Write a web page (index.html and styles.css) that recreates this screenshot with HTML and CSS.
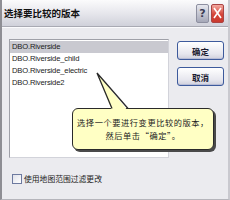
FILE: index.html
```html
<!DOCTYPE html>
<html lang="zh">
<head>
<meta charset="utf-8">
<link rel="stylesheet" href="styles.css">
</head>
<body>
<div class="window">
  <div class="titlebar">
    <span class="title">选择要比较的版本</span>
    <div class="caps">
      <span class="cap help">?</span>
      <span class="cap close">
        <svg width="9" height="12" viewBox="0 0 9 12"><path d="M1 1 L8 11 M8 1 L1 11" stroke="#fff" stroke-width="1.6" fill="none"/></svg>
      </span>
    </div>
  </div>
  <div class="body">
    <div class="main">
      <div class="list">
        <div class="row sel">DBO.Riverside</div>
        <div class="row">DBO.Riverside_child</div>
        <div class="row">DBO.Riverside_electric</div>
        <div class="row">DBO.Riverside2</div>
      </div>
      <div class="btns">
        <div class="btn">确定</div>
        <div class="btn">取消</div>
      </div>
    </div>
    <div class="footer">
      <span class="check"></span>
      <span class="label">使用地图范围过滤更改</span>
    </div>
  </div>
  <div class="callout">
    <div class="bubble">
      <div>选择一个要进行变更比较的版本，</div>
      <div>然后单击“确定”。</div>
    </div>
    <svg class="tail" width="40" height="40" viewBox="0 0 40 40">
      <path d="M1 1 L16 39 L32 39 Z" fill="#ffffc4"/>
      <path d="M16 36.5 L1 1 L32 36.5" fill="none" stroke="#2a2a2a" stroke-width="1.3" stroke-linejoin="miter"/>
    </svg>
  </div>
</div>
</body>
</html>
```

FILE: styles.css
```css
* { box-sizing: border-box; }
html, body { margin: 0; padding: 0; }
body {
  width: 230px;
  height: 200px;
  overflow: hidden;
  background: #e9e9ee;
  font-family: "Liberation Sans", "Noto Sans CJK SC", sans-serif;
}
.window {
  position: relative;
  width: 230px;
  height: 200px;
  background: #ebebef;
  border-left: 2px solid #8e8e94;
  border-right: 2px solid #c9c9cf;
  border-bottom: 1px solid #b5b5bb;
}
.titlebar {
  height: 27px;
  display: flex;
  align-items: center;
  justify-content: space-between;
  padding: 0 4px 0 2px;
  background: linear-gradient(#fbfbfc 0%, #e9e9ee 45%, #d0d1da 100%);
  border-bottom: 1px solid #a9aab3;
}
.title {
  font-family: "Noto Sans CJK SC", sans-serif;
  font-weight: 700;
  font-size: 9.5px;
  color: #111;
}
.caps {
  display: flex;
  gap: 2px;
  align-items: center;
}
.cap {
  width: 13px;
  height: 19px;
  border-radius: 2px;
  display: flex;
  align-items: center;
  justify-content: center;
}
.help {
  background: linear-gradient(#e6e7ee, #a6a8b8);
  border: 1px solid #8d8fa0;
  color: #3b3d55;
  font-family: "DejaVu Sans", sans-serif;
  font-weight: 700;
  font-size: 11px;
}
.close {
  background: linear-gradient(#f3a9a0, #d6463a 55%, #c9392e);
  border: 1px solid #a44;
}
.body {
  padding: 11px 4px 0 7px;
  border-top: 1px solid #fbfbfd;
}
.main {
  display: flex;
  gap: 8px;
  align-items: flex-start;
}
.list {
  width: 160px;
  height: 119px;
  background: #fff;
  border: 1px solid #9fa0a8;
  border-right-color: #d2d3da;
  border-bottom-color: #d2d3da;
  padding-top: 1px;
}
.row {
  height: 12px;
  line-height: 12px;
  padding-left: 2px;
  font-size: 7.6px;
  letter-spacing: -0.15px;
  color: #1a1a1a;
  white-space: nowrap;
}
.row.sel { background: #c9c9d0; }
.btns {
  display: flex;
  flex-direction: column;
  gap: 7px;
  padding-top: 2px;
}
.btn {
  width: 47px;
  height: 19px;
  border: 1px solid #3d5a9c;
  border-radius: 3px;
  background: linear-gradient(#ffffff, #e6e6ee 70%, #cfd0dc);
  box-shadow: inset 0 -1px 0 #b7bcd6;
  display: flex;
  align-items: center;
  justify-content: center;
  font-family: "Noto Sans CJK SC", sans-serif;
  font-weight: 700;
  font-size: 8.5px;
  color: #1a1a30;
}
.footer {
  display: flex;
  align-items: center;
  gap: 2px;
  margin-top: 15px;
  padding-left: 3px;
}
.check {
  flex: none;
  width: 10px;
  height: 10px;
  border: 1px solid #6d7aa0;
  background: linear-gradient(135deg, #e0e2ea, #ffffff);
}
.label {
  font-family: "Noto Sans CJK SC", sans-serif;
  font-size: 7.8px;
  color: #222;
  white-space: nowrap;
}
.callout {
  position: absolute;
  left: 70px;
  top: 72px;
}
.tail {
  position: absolute;
  left: 24px;
  top: 0;
}
.bubble {
  position: absolute;
  left: 0;
  top: 36px;
  width: 142px;
  height: 42px;
  background: #ffffc4;
  border: 1.3px solid #2a2a2a;
  border-radius: 6px;
  box-shadow: 2px 2px 0 #4a4a4a;
  display: flex;
  flex-direction: column;
  justify-content: center;
  align-items: center;
  font-family: "Noto Sans CJK SC", sans-serif;
  font-size: 8.2px;
  line-height: 13px;
  color: #222;
  letter-spacing: 0.6px;
}
```
